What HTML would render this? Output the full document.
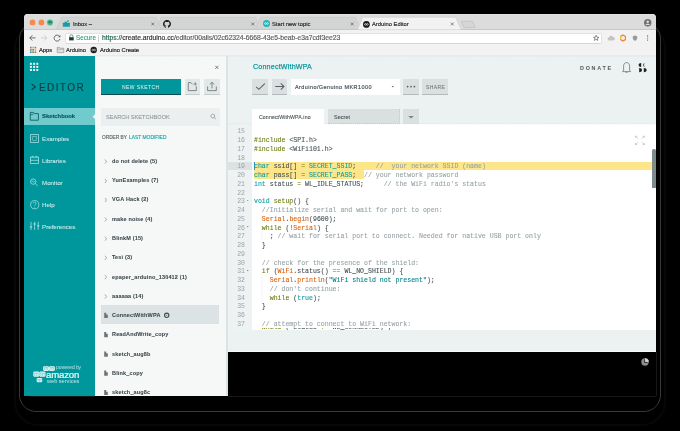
<!DOCTYPE html>
<html><head><meta charset="utf-8">
<style>
*{margin:0;padding:0;box-sizing:border-box}
html,body{width:680px;height:431px;overflow:hidden;background:#000}
body{position:relative;font-family:"Liberation Sans",sans-serif;color:#434f54}
.a{position:absolute}
.t{position:absolute;white-space:nowrap;line-height:1;will-change:transform}
svg{position:absolute;overflow:visible}
#outline{position:absolute;left:19.1px;top:22px;width:641.8px;height:390px;border:1.5px solid #383838;border-radius:17px}
#outline2{position:absolute;left:14px;top:24px;width:652px;height:402px;border:2px solid #070707;border-radius:24px}
#win{position:absolute;left:24px;top:14px;width:632px;height:382px;background:#f2f2f2;border-radius:4px 4px 0 0;overflow:hidden}
#tabs{position:absolute;left:24px;top:14px;width:632px;height:15px;background:#dcdcdc;border-radius:4px 4px 0 0}
#side{position:absolute;left:24px;top:56px;width:71px;height:340px;background:#00979c}
#panel{position:absolute;left:95px;top:56px;width:131px;height:340px;background:#f6f8f8}
#pborder{position:absolute;left:226px;top:56px;width:2px;height:340px;background:#dde3e3}
#editor{position:absolute;left:228px;top:56px;width:428px;height:296px;background:#ecf1f1}
#console{position:absolute;left:228px;top:352px;width:428px;height:44px;background:#000}
.tab{position:absolute;top:17px;height:12px}
.tabtxt{font-size:5.8px;color:#262626;top:22px;-webkit-text-stroke:0.16px #262626}
.close{font-size:7px;color:#555;top:20px}
.bm{font-size:5.8px;color:#262626;top:47.6px;-webkit-text-stroke:0.18px #262626}
.nav{font-size:6px;color:#424242}
.side-item{position:absolute;left:24px;width:71px;height:17px}
.side-txt{font-size:5.8px;color:#c6eaeb;left:42px;-webkit-text-stroke:0.08px #c6eaeb}
.sk{font-size:5.5px;font-weight:bold;color:#3a4548;left:112.1px;letter-spacing:0.16px;-webkit-text-stroke:0.05px #3a4548;margin-top:0.7px}
.chev{left:105px}
#code{position:absolute;left:228px;top:124px;width:428px;height:206px;background:#fff;overflow:hidden}
#gutter{position:absolute;left:228px;top:124px;width:24px;height:206px;background:#eef2f2}
.ln{position:absolute;left:228px;width:17px;text-align:right;font-family:"Liberation Mono",monospace;font-size:6.5px;line-height:8.72px;color:#9aa4a6;will-change:transform}
.cl{position:absolute;left:254px;font-family:"Liberation Mono",monospace;font-size:6.56px;line-height:8.72px;color:#434f54;white-space:pre;will-change:transform;-webkit-text-stroke:0.1px currentColor}
.k{color:#0a9ea3}.o{color:#6e7c0c}.f{color:#d9600e}.c{color:#97a4a6}.s{color:#00838a}
</style></head><body>
<div id="outline2"></div>
<div id="outline"></div>
<div class="a" style="left:30px;top:395.8px;width:626px;height:0.8px;background:#171717"></div>
<div class="a" style="left:655.6px;top:352px;width:0.8px;height:44px;background:#171717"></div>
<div id="win"></div>
<div id="tabs"></div>
<div class="a" style="left:26px;top:14px;width:628px;height:0.6px;background:#e2e2e2"></div>

<!-- traffic lights -->
<svg width="60" height="30" style="left:0;top:0">
  <circle cx="32.5" cy="22.4" r="2.9" fill="#f48b4c"/>
  <circle cx="41.4" cy="22.4" r="2.9" fill="#f48b4c"/>
  <circle cx="50" cy="22.4" r="3" fill="#3aae95" stroke="#a5d6a0" stroke-width="0.5"/>
  <path d="M48.3 21.6 L49.1 22.6 L50 21.6 L50.9 22.6 L51.7 21.6" fill="none" stroke="#0d4d4a" stroke-width="0.8"/>
</svg>
<!-- tabs -->
<svg width="680" height="30" style="left:0;top:0">
  <path d="M56.2 29.3 L61.6 17.3 L156 17.3 L161.4 29.3 Z" fill="#d3d5d5"/>
  <path d="M155.8 29.3 L161.2 17.3 L255.6 17.3 L261 29.3 Z" fill="#d3d5d5" stroke="#c2c4c4" stroke-width="0.5"/>
  <path d="M255.4 29.3 L260.8 17.3 L355.2 17.3 L360.6 29.3 Z" fill="#d3d5d5" stroke="#c2c4c4" stroke-width="0.5"/>
  <path d="M56.2 29.3 L61.6 17.3 L156 17.3 L161.4 29.3" fill="none" stroke="#c2c4c4" stroke-width="0.5"/>
  <path d="M357.6 29.6 L362.6 17.3 L455.6 17.3 L461 29.6 Z" fill="#f2f2f2" stroke="#c8c8c8" stroke-width="0.5"/>
  <path d="M461.4 21.3 L472.6 21.3 L475.2 27.4 L464 27.4 Z" fill="#d6d6d6" stroke="#b8b8b8" stroke-width="0.6"/>
  <!-- inbox icon -->
  <path d="M62.8 23 L69.9 23 L69.9 26.8 L62.8 26.8 Z" fill="#17a2a8"/>
  <path d="M62.8 23 L64.5 23 L65.5 24.2 L67.2 24.2 L68.2 23 L69.9 23" fill="none" stroke="#0d7f84" stroke-width="0.4"/>
  <path d="M64.6 21.8 L66 22.9 L68.6 20.4" fill="none" stroke="#17a2a8" stroke-width="1.1"/>
  <!-- close x's -->
  <g stroke="#5a5a5a" stroke-width="0.75">
   <path d="M151.4 22.6 L154.2 25.4 M154.2 22.6 L151.4 25.4"/>
   <path d="M251.4 22.6 L254.2 25.4 M254.2 22.6 L251.4 25.4"/>
   <path d="M350.8 22.6 L353.6 25.4 M353.6 22.6 L350.8 25.4"/>
   <path d="M450.9 22.6 L453.7 25.4 M453.7 22.6 L450.9 25.4"/>
  </g>
</svg>
<div class="a" style="left:24px;top:29px;width:334px;height:0.6px;background:#c6c8c8"></div>
<div class="a" style="left:461px;top:29px;width:195px;height:0.6px;background:#c6c8c8"></div>

<div class="t tabtxt" style="left:73px">Inbox –</div>
<svg width="8" height="8" style="left:162.6px;top:20.1px" viewBox="0 0 16 16"><path fill="#161616" d="M8 0C3.58 0 0 3.58 0 8c0 3.54 2.29 6.53 5.47 7.59.4.07.55-.17.55-.38 0-.19-.01-.82-.01-1.49-2.01.37-2.53-.49-2.69-.94-.09-.23-.48-.94-.82-1.13-.28-.15-.68-.52-.01-.53.63-.01 1.08.58 1.23.82.72 1.21 1.87.87 2.33.66.07-.52.28-.87.51-1.07-1.78-.2-3.64-.89-3.64-3.95 0-.87.31-1.59.82-2.15-.08-.2-.36-1.02.08-2.12 0 0 .67-.21 2.2.82.64-.18 1.32-.27 2-.27.68 0 1.36.09 2 .27 1.53-1.04 2.2-.82 2.2-.82.44 1.1.16 1.92.08 2.12.51.56.82 1.27.82 2.15 0 3.07-1.87 3.75-3.65 3.95.29.25.54.73.54 1.48 0 1.07-.01 1.93-.01 2.2 0 .21.15.46.55.38A8.013 8.013 0 0016 8c0-4.42-3.58-8-8-8z"/></svg>
<svg width="8" height="8" style="left:262.6px;top:20.4px" viewBox="0 0 8 8"><circle cx="3.5" cy="3.5" r="3.5" fill="#24b3b8"/><path d="M1.6 3.5 C1.6 2.4 3.5 2.4 3.5 3.5 C3.5 4.6 5.4 4.6 5.4 3.5 C5.4 2.4 3.5 2.4 3.5 3.5 C3.5 4.6 1.6 4.6 1.6 3.5 Z" fill="none" stroke="#fff" stroke-width="0.7"/></svg>
<div class="t tabtxt" style="left:272px">Start new topic</div>
<svg width="8" height="8" style="left:362.6px;top:20.6px" viewBox="0 0 8 8"><circle cx="3.4" cy="3.4" r="3.4" fill="#1c1c1c"/><path d="M1.5 3.4 C1.5 2.3 3.4 2.3 3.4 3.4 C3.4 4.5 5.3 4.5 5.3 3.4 C5.3 2.3 3.4 2.3 3.4 3.4 C3.4 4.5 1.5 4.5 1.5 3.4 Z" fill="none" stroke="#fff" stroke-width="0.6"/></svg>
<div class="t tabtxt" style="left:372px">Arduino Editor</div>
<!-- profile -->
<svg width="8" height="8" style="left:644.3px;top:18.5px" viewBox="0 0 8 8"><circle cx="3.7" cy="3.7" r="3.7" fill="#707070"/><circle cx="3.7" cy="2.8" r="1.2" fill="#dcdcdc"/><path d="M1.6 5.6 C2 4.4 5.4 4.4 5.8 5.6 L5.8 6 L1.6 6 Z" fill="#dcdcdc"/></svg>

<!-- toolbar -->
<svg width="680" height="60" style="left:0;top:0">
  <g fill="none" stroke="#5d5d5d" stroke-width="0.9">
    <path d="M29.8 37.9 L35.5 37.9 M32.3 35.3 L29.8 37.9 L32.3 40.5"/>
    <path d="M59.6 36.4 A3 3 0 1 0 60 39" />
  </g>
  <path d="M60.4 34.9 L60.4 37.3 L58 37.3 Z" fill="#5d5d5d"/>
  <g fill="none" stroke="#cdcdcd" stroke-width="0.9">
    <path d="M41.2 37.9 L46.9 37.9 M44.4 35.3 L46.9 37.9 L44.4 40.5"/>
  </g>
  <!-- lock -->
  <path d="M69.8 37.2 L69.8 36.4 A1.6 1.6 0 0 1 73 36.4 L73 37.2" fill="none" stroke="#1f7a52" stroke-width="0.7"/>
  <rect x="69.1" y="37.2" width="4.6" height="3.2" fill="#173d2c"/>
  <!-- star -->
  <path d="M596.2 35.3 L597 37.2 L598.9 37.3 L597.4 38.5 L597.9 40.4 L596.2 39.3 L594.5 40.4 L595 38.5 L593.5 37.3 L595.4 37.2 Z" fill="none" stroke="#5a5a5a" stroke-width="0.7"/>
  <!-- drive -->
  <path d="M608.6 40.4 A1.5 1.5 0 0 1 608.9 37.5 A2.2 2.2 0 0 1 613 37 A1.7 1.7 0 0 1 613.4 40.4 Z" fill="#c4c4c4"/>
  <!-- orange ext -->
  <path d="M623 35 L625.4 36.4 L625.4 39.6 L623 41 L620.6 39.6 L620.6 36.4 Z" fill="none" stroke="#f07f25" stroke-width="1.1"/><path d="M620.6 36.6 L620.6 39.4" stroke="#f5c04a" stroke-width="1.1"/>
  <!-- shield -->
  <path d="M635 35.4 L637.2 36.2 L637.2 38 C637.2 39.4 636 40.4 635 40.8 C634 40.4 632.8 39.4 632.8 38 L632.8 36.2 Z" fill="#9a9a9a"/>
  <!-- menu -->
  <g fill="#5a5a5a"><circle cx="647.6" cy="35.9" r="0.6"/><circle cx="647.6" cy="38" r="0.6"/><circle cx="647.6" cy="40.1" r="0.6"/></g>
  <!-- apps grid -->
  <g>
   <rect x="30" y="46.8" width="1.6" height="1.6" fill="#e4572e"/><rect x="32.3" y="46.8" width="1.6" height="1.6" fill="#f4a228"/><rect x="34.6" y="46.8" width="1.6" height="1.6" fill="#e4572e"/>
   <rect x="30" y="49.1" width="1.6" height="1.6" fill="#2f9e5a"/><rect x="32.3" y="49.1" width="1.6" height="1.6" fill="#3f7fd8"/><rect x="34.6" y="49.1" width="1.6" height="1.6" fill="#f4a228"/>
   <rect x="30" y="51.4" width="1.6" height="1.6" fill="#3f7fd8"/><rect x="32.3" y="51.4" width="1.6" height="1.6" fill="#2f9e5a"/><rect x="34.6" y="51.4" width="1.6" height="1.6" fill="#e4572e"/>
  </g>
  <!-- folder -->
  <path d="M57.2 47.4 L59.6 47.4 L60.3 48.2 L63.8 48.2 L63.8 52.6 L57.2 52.6 Z" fill="#e0e0e0" stroke="#8a8a8a" stroke-width="0.6"/>
  <path d="M57.2 49.2 L63.8 49.2" stroke="#8a8a8a" stroke-width="0.5"/>
  <!-- arduino create -->
  <circle cx="93.7" cy="50" r="3.2" fill="#1c1c1c"/>
  <path d="M91.8 50 C91.8 48.9 93.7 48.9 93.7 50 C93.7 51.1 95.6 51.1 95.6 50 C95.6 48.9 93.7 48.9 93.7 50 C93.7 51.1 91.8 51.1 91.8 50 Z" fill="none" stroke="#ddd" stroke-width="0.6"/>
</svg>
<div class="a" style="left:65.2px;top:33px;width:536.8px;height:11.2px;background:#fff;border:0.6px solid #e2e2e2;border-bottom-color:#d6d6d6;border-radius:2px"></div>
<svg width="680" height="60" style="left:0;top:0">
  <path d="M69.8 37.2 L69.8 36.4 A1.6 1.6 0 0 1 73 36.4 L73 37.2" fill="none" stroke="#1f7a52" stroke-width="0.7"/>
  <rect x="69.1" y="37.2" width="4.6" height="3.2" fill="#173d2c"/>
  <path d="M596.2 35.3 L597 37.2 L598.9 37.3 L597.4 38.5 L597.9 40.4 L596.2 39.3 L594.5 40.4 L595 38.5 L593.5 37.3 L595.4 37.2 Z" fill="none" stroke="#5a5a5a" stroke-width="0.7"/>
</svg>
<div class="t" style="left:76.4px;top:35.4px;font-size:6.3px;color:#22936a;-webkit-text-stroke:0.06px #22936a">Secure</div>
<div class="a" style="left:98.2px;top:34.6px;width:0.6px;height:7px;background:#cfcfcf"></div>
<div class="t" style="left:101.7px;top:35.1px;font-size:6.74px;color:#333;-webkit-text-stroke:0.18px #333"><span style="color:#18875a">https://</span>create.arduino.cc<span style="color:#7a7a7a">/editor/00alis/02c62324-6668-43e5-beab-e3a7cdf3ee23</span></div>

<!-- bookmarks -->
<div class="t bm" style="left:38.5px">Apps</div>
<div class="t bm" style="left:66px">Arduino</div>
<div class="t bm" style="left:99.9px">Arduino Create</div>

<div id="side"></div>
<div id="panel"></div>
<div id="pborder"></div>
<div id="editor"></div>
<div id="console"></div>
<svg width="680" height="60" style="left:0;top:0"><path d="M95 55.9 L656 55.9" stroke="#d2d6d6" stroke-width="0.8" stroke-dasharray="1.2 0.9"/></svg>

<!-- sidebar -->
<svg width="100" height="400" style="left:0;top:0">
  <g fill="#e9f7f7">
   <rect x="29.9" y="62.8" width="2" height="2"/><rect x="33.1" y="62.8" width="2" height="2"/><rect x="36.3" y="62.8" width="2" height="2"/>
   <rect x="29.9" y="65.9" width="2" height="2"/><rect x="33.1" y="65.9" width="2" height="2"/><rect x="36.3" y="65.9" width="2" height="2"/>
   <rect x="29.9" y="69" width="2" height="2"/><rect x="33.1" y="69" width="2" height="2"/><rect x="36.3" y="69" width="2" height="2"/>
  </g>
  <path d="M31.6 83.9 L35.2 86.9 L31.6 89.9" fill="none" stroke="#0a3a3d" stroke-width="1.15"/>
</svg>
<div class="t" style="left:38.6px;top:83.00px;font-size:10px;letter-spacing:1.4px;color:#083d40;-webkit-text-stroke:0.12px #083d40">EDITOR</div>
<div class="side-item" style="top:107.9px;height:16.8px;background:#71cbcc"></div>
<svg width="100" height="400" style="left:0;top:0">
  <path d="M92.6 116.7 L95.2 114.3 L95.2 119.1 Z" fill="#f6f8f8"/>
  <!-- folder sketchbook -->
  <path d="M30.3 112.4 L33.4 112.4 L34.3 113.6 L38.4 113.6 L38.4 120.2 L30.3 120.2 Z" fill="none" stroke="#0a5a5d" stroke-width="0.85"/>
  <path d="M30.3 114.6 L32.8 114.6 L33.6 113.6" fill="none" stroke="#0a5a5d" stroke-width="0.7"/>
  <g fill="none" stroke="#a8dedf" stroke-width="0.8">
   <!-- examples -->
   <rect x="30.6" y="134.6" width="7.9" height="7.8"/>
   <rect x="32.8" y="136.6" width="3.4" height="3.9" stroke-width="0.5"/>
   <!-- libraries -->
   <rect x="30.6" y="157.2" width="7.9" height="6.2"/>
   <path d="M30.6 160.3 L38.5 160.3 M31.6 157.2 L32.6 155.9 L33.6 157.2 M35.5 157.2 L36.5 155.9 L37.5 157.2"/>
   <!-- monitor -->
   <circle cx="33.2" cy="181.6" r="2.7"/>
   <path d="M35.2 183.6 L37.8 186"/>
   <path d="M31.2 181.8 L32.1 181.8 L32.8 180.6 L33.6 182.6 L34.3 181.6 L35.2 181.6" stroke-width="0.5"/>
   <!-- help -->
   <circle cx="34.7" cy="204.7" r="4.1"/>
   <path d="M33.3 203.5 A1.4 1.4 0 1 1 35.3 204.8 C34.8 205.1 34.7 205.4 34.7 206" stroke-width="0.7"/>
   <!-- prefs -->
   <path d="M31 221.8 L31 229.9 M34.6 221.8 L34.6 229.9 M38.2 221.8 L38.2 229.9"/>
  </g>
  <g fill="#a8dedf">
   <circle cx="34.7" cy="207.3" r="0.45"/>
   <rect x="29.9" y="226.4" width="2.2" height="1.2"/>
   <rect x="33.5" y="223.4" width="2.2" height="1.2"/>
   <rect x="37.1" y="225.2" width="2.2" height="1.2"/>
  </g>
</svg>
<div class="t side-txt" style="top:114.30px;color:#08575a;font-weight:bold;font-size:5.85px;-webkit-text-stroke:0.15px #08575a">Sketchbook</div>
<div class="t side-txt" style="top:136.30px;font-size:6.2px">Examples</div>
<div class="t side-txt" style="top:158.10px;font-size:6.2px">Libraries</div>
<div class="t side-txt" style="top:180.00px;font-size:6.2px">Monitor</div>
<div class="t side-txt" style="top:202.00px;font-size:6.2px">Help</div>
<div class="t side-txt" style="top:224.00px;font-size:6.2px">Preferences</div>

<!-- aws logo -->
<svg width="100" height="400" style="left:0;top:0">
<path d="M43.90 366.20 L48.20 366.20 L49.00 367.10 L49.00 370.10 L48.20 371.00 L43.90 371.00 L43.10 370.10 L43.10 367.10 Z" fill="#e8f7f7"/>
<path d="M46.05 367.50 L46.05 370.50 M44.40 367.80 L44.40 370.20 M47.70 367.80 L47.70 370.20 M43.70 367.40 L46.05 367.70 L48.40 367.40" fill="none" stroke="#3fb0b3" stroke-width="0.45"/>
<path d="M49.80 366.20 L54.10 366.20 L54.90 367.10 L54.90 370.10 L54.10 371.00 L49.80 371.00 L49.00 370.10 L49.00 367.10 Z" fill="#e8f7f7"/>
<path d="M51.95 367.50 L51.95 370.50 M50.30 367.80 L50.30 370.20 M53.60 367.80 L53.60 370.20 M49.60 367.40 L51.95 367.70 L54.30 367.40" fill="none" stroke="#3fb0b3" stroke-width="0.45"/>
<path d="M34.10 371.60 L38.60 371.60 L39.40 372.50 L39.40 375.80 L38.60 376.70 L34.10 376.70 L33.30 375.80 L33.30 372.50 Z" fill="#e8f7f7"/>
<path d="M36.35 372.90 L36.35 376.20 M34.64 373.20 L34.64 375.90 M38.06 373.20 L38.06 375.90 M33.90 372.80 L36.35 373.10 L38.80 372.80" fill="none" stroke="#3fb0b3" stroke-width="0.45"/>
<path d="M40.20 371.60 L44.70 371.60 L45.50 372.50 L45.50 375.80 L44.70 376.70 L40.20 376.70 L39.40 375.80 L39.40 372.50 Z" fill="#e8f7f7"/>
<path d="M42.45 372.90 L42.45 376.20 M40.74 373.20 L40.74 375.90 M44.16 373.20 L44.16 375.90 M40.00 372.80 L42.45 373.10 L44.90 372.80" fill="none" stroke="#3fb0b3" stroke-width="0.45"/>
<path d="M37.50 377.90 L41.40 377.90 L42.20 378.80 L42.20 381.40 L41.40 382.30 L37.50 382.30 L36.70 381.40 L36.70 378.80 Z" fill="#e8f7f7"/>
<path d="M39.45 379.20 L39.45 381.80 M37.91 379.50 L37.91 381.50 M40.99 379.50 L40.99 381.50 M37.30 379.10 L39.45 379.40 L41.60 379.10" fill="none" stroke="#3fb0b3" stroke-width="0.45"/>
</svg>
<div class="t" style="left:55.8px;top:365.9px;font-size:4.85px;color:#bfe6e7">powered by</div>
<div class="t" style="left:46.4px;top:370.3px;font-size:9.6px;color:#eef9f9;letter-spacing:-0.15px;-webkit-text-stroke:0.2px #eef9f9">amazon</div>
<div class="t" style="left:46.8px;top:379.1px;font-size:5.6px;color:#bfe6e7">web services</div>

<!-- panel -->
<svg width="240" height="400" style="left:0;top:0">
  <path d="M215.3 65.8 L218.4 68.9 M218.4 65.8 L215.3 68.9" stroke="#5a5a5a" stroke-width="0.75"/>
</svg>
<div class="a" style="left:100.9px;top:78.8px;width:79.9px;height:16px;background:#00979c;border-bottom:1.6px solid #0f4b4e"></div>
<div class="t" style="left:122.2px;top:84.70px;font-size:5px;letter-spacing:0.42px;color:#e3f5f5">NEW SKETCH</div>
<div class="a" style="left:184.6px;top:78.8px;width:15.3px;height:16px;background:#e2e7e7;border-bottom:1.6px solid #c6cdcd"></div>
<div class="a" style="left:204.1px;top:78.8px;width:15.7px;height:16px;background:#e2e7e7;border-bottom:1.6px solid #c6cdcd"></div>
<svg width="240" height="400" style="left:0;top:0">
  <g fill="none" stroke="#5d676a" stroke-width="0.75">
   <path d="M192.5 84.3 L190.8 82.6 L188.3 82.6 L188.3 90.6 L196.3 90.6 L196.3 86.3"/>
   <path d="M193.5 84 L197 84 M195.25 82.2 L195.25 85.8" stroke-width="0.6"/>
   <path d="M207.6 86.4 L207.6 90.6 L216.3 90.6 L216.3 86.4"/>
   <path d="M212 88.4 L212 82.4 M209.9 84.4 L212 82.3 L214.1 84.4"/>
  </g>
</svg>
<div class="a" style="left:100.9px;top:107.9px;width:118.9px;height:17.8px;background:#eceff0"></div>
<div class="t" style="left:106px;top:115.20px;font-size:5.6px;color:#8f999c;-webkit-text-stroke:0.1px #8f999c">SEARCH SKETCHBOOK</div>
<svg width="240" height="400" style="left:0;top:0">
  <circle cx="212.8" cy="116.1" r="1.9" fill="none" stroke="#8a9497" stroke-width="0.7"/>
  <path d="M214.2 117.5 L215.9 119.2" stroke="#8a9497" stroke-width="0.8"/>
</svg>
<div class="t" style="left:101.8px;top:136.00px;font-size:4.75px;color:#5d686b;-webkit-text-stroke:0.15px #5d686b">ORDER BY</div>
<div class="t" style="left:128.6px;top:136.00px;font-size:4.9px;color:#19a7ab;-webkit-text-stroke:0.15px #19a7ab">LAST MODIFIED</div>

<svg width="240" height="400" style="left:0;top:0">
  <g fill="none" stroke="#6b7578" stroke-width="0.6">
   <path d="M104.9 159.5 L106.6 161.5 L104.9 163.5"/>
   <path d="M104.9 179.0 L106.6 181.0 L104.9 183.0"/>
   <path d="M104.9 198.0 L106.6 200.0 L104.9 202.0"/>
   <path d="M104.9 217.5 L106.6 219.5 L104.9 221.5"/>
   <path d="M104.9 236.7 L106.6 238.7 L104.9 240.7"/>
   <path d="M104.9 255.8 L106.6 257.8 L104.9 259.8"/>
   <path d="M104.9 275.2 L106.6 277.2 L104.9 279.2"/>
   <path d="M104.9 294.5 L106.6 296.5 L104.9 298.5"/>
  </g>
</svg>
<div class="t sk" style="top:158.3px">do not delete (5)</div>
<div class="t sk" style="top:177.8px">YunExamples (7)</div>
<div class="t sk" style="top:196.8px">VGA Hack (2)</div>
<div class="t sk" style="top:216.3px">make noise (4)</div>
<div class="t sk" style="top:235.5px">BlinkM (15)</div>
<div class="t sk" style="top:254.5px">Tesi (3)</div>
<div class="t sk" style="top:273.9px">epaper_arduino_130412 (1)</div>
<div class="t sk" style="top:293.2px">aaaaaa (14)</div>
<div class="a" style="left:101.3px;top:305.2px;width:118.1px;height:19px;background:#dce3e4"></div>
<svg width="240" height="400" style="left:0;top:0">
  <g fill="#6b7578">
   <path d="M104.2 312.8 L106.2 312.8 L106.2 314.6 L107.8 314.6 L107.8 318 L104.2 318 Z"/>
   <path d="M104.2 332 L106.2 332 L106.2 333.8 L107.8 333.8 L107.8 337.2 L104.2 337.2 Z"/>
   <path d="M104.2 351.5 L106.2 351.5 L106.2 353.3 L107.8 353.3 L107.8 356.7 L104.2 356.7 Z"/>
   <path d="M104.2 370.5 L106.2 370.5 L106.2 372.3 L107.8 372.3 L107.8 375.7 L104.2 375.7 Z"/>
   <path d="M104.2 390 L106.2 390 L106.2 391.8 L107.8 391.8 L107.8 395 L104.2 395 Z"/>
  </g>
  <circle cx="166.7" cy="315.3" r="2.15" fill="none" stroke="#3f4a4d" stroke-width="1.1"/>
  <circle cx="166.7" cy="315.3" r="0.5" fill="#3f4a4d"/>
</svg>
<div class="t sk" style="top:312.4px">ConnectWithWPA</div>
<div class="t sk" style="top:331.6px">ReadAndWrite_copy</div>
<div class="t sk" style="top:351.1px">sketch_aug8b</div>
<div class="t sk" style="top:370.1px">Blink_copy</div>
<div class="t sk" style="top:389.6px">sketch_aug8c</div>

<!-- editor header -->
<div class="t" style="left:252.5px;top:63.6px;font-size:7.1px;letter-spacing:0.2px;color:#0e9a9e;-webkit-text-stroke:0.25px #0e9a9e">ConnectWithWPA</div>
<div class="t" style="left:580px;top:66.1px;font-size:5.4px;font-weight:bold;letter-spacing:1.75px;color:#4f5a5e">DONATE</div>
<svg width="680" height="130" style="left:0;top:0">
  <!-- bell -->
  <path d="M622.6 71.6 L630.6 71.6 L629.6 70.2 L629.6 66.2 C629.6 63.8 628.2 62.6 626.6 62.6 C625 62.6 623.6 63.8 623.6 66.2 L623.6 70.2 Z" fill="none" stroke="#5b6669" stroke-width="0.7"/>
  <path d="M625.6 72.4 L627.6 72.4" stroke="#5b6669" stroke-width="0.6"/>
  <!-- profile blobs -->
  <g fill="#1a2023">
   <path d="M641.2 63.1 L641.2 67 A2.6 1.95 0 0 1 641.2 63.1 Z"/>
   <path d="M645.2 63.1 A2 1.95 0 0 0 645.2 67 A1.2 1.95 0 0 1 645.2 63.1 Z"/>
   <path d="M639.2 68 L639.2 72.2 A2.8 2.1 0 0 0 639.2 68 Z"/>
   <path d="M643.8 68 L643.8 72.2 A2.8 2.1 0 0 0 643.8 68 Z"/>
  </g>
</svg>
<div class="a" style="left:252.3px;top:79.1px;width:15.6px;height:15.9px;background:#dae0e0;border-bottom:1.5px solid #b3baba"></div>
<div class="a" style="left:271.9px;top:79.1px;width:15.1px;height:15.9px;background:#dae0e0;border-bottom:1.5px solid #b3baba"></div>
<div class="a" style="left:290.7px;top:79.4px;width:109.1px;height:15.3px;background:#fff"></div>
<div class="t" style="left:295px;top:85.30px;font-size:5.5px;letter-spacing:0.42px;color:#4a5559;-webkit-text-stroke:0.18px #4a5559">Arduino/Genuino MKR1000</div>
<div class="a" style="left:403.2px;top:79.1px;width:15.6px;height:15.9px;background:#dae0e0;border-bottom:1.5px solid #b3baba"></div>
<div class="a" style="left:422.3px;top:79.1px;width:25.7px;height:15.9px;background:#dae0e0;border-bottom:1.5px solid #b3baba"></div>
<div class="t" style="left:425.7px;top:85.40px;font-size:5px;letter-spacing:0.42px;color:#6f797c;-webkit-text-stroke:0.08px #6f797c">SHARE</div>
<svg width="680" height="130" style="left:0;top:0">
  <path d="M256.1 86.9 L258.9 89.4 L264.8 83.6" fill="none" stroke="#56626a" stroke-width="1.05"/>
  <path d="M275.2 86.5 L284 86.5 M280.8 83.4 L284 86.5 L280.8 89.6" fill="none" stroke="#56626a" stroke-width="1.05"/>
  <path d="M391.6 85.9 L394 85.9 L392.8 87.4 Z" fill="#6a7477"/>
  <g fill="#4f5a5e"><circle cx="407.6" cy="86.6" r="0.85"/><circle cx="411" cy="86.6" r="0.85"/><circle cx="414.4" cy="86.6" r="0.85"/></g>
</svg>

<div class="a" style="left:252px;top:109px;width:72.2px;height:15.4px;background:#fff"></div>
<div class="t" style="left:259px;top:114.5px;font-size:5.2px;letter-spacing:0.12px;color:#4a5559;-webkit-text-stroke:0.12px #4a5559">ConnectWithWPA.ino</div>
<div class="a" style="left:328px;top:109.1px;width:71.8px;height:14.9px;background:#dae0e0;border-right:0.6px dotted #c2caca;border-bottom:0.6px dotted #c2caca"></div>
<div class="t" style="left:334.3px;top:114.6px;font-size:5.4px;letter-spacing:0.1px;color:#4a5559;-webkit-text-stroke:0.12px #4a5559">Secret</div>
<div class="a" style="left:403.2px;top:109.1px;width:15.6px;height:14.9px;background:#dae0e0"></div>
<svg width="680" height="130" style="left:0;top:0">
  <path d="M408.2 116 L413.8 116 L411 118.6 Z" fill="#7b8588"/>
</svg>

<!-- code -->
<div id="code"></div>
<div id="gutter"></div>
<div class="a" style="left:228px;top:161.5px;width:24px;height:8.9px;background:#dce2e3"></div>
<div class="a" style="left:254.1px;top:161.5px;width:398px;height:8.72px;background:#fde68a"></div>
<div class="a" style="left:254.1px;top:170.2px;width:109.5px;height:8.5px;background:#fde68a"></div>
<div class="a" style="left:254.1px;top:161.5px;width:0.6px;height:8.6px;background:#3f8fb0"></div>
<!--CODE-->
<div class="a" style="left:0;top:124px;width:680px;height:205.6px;overflow:hidden"><div class="a" style="left:0;top:-124px;width:680px;height:431px">
<div class="ln" style="top:128.26px">15</div>
<div class="ln" style="top:137.02px">16</div>
<div class="ln" style="top:145.78px">17</div>
<div class="ln" style="top:154.54px">18</div>
<div class="ln" style="top:163.30px">19</div>
<div class="ln" style="top:172.06px">20</div>
<div class="ln" style="top:180.82px">21</div>
<div class="ln" style="top:189.58px">22</div>
<div class="ln" style="top:198.34px">23</div>
<div class="ln" style="top:207.10px">24</div>
<div class="ln" style="top:215.86px">25</div>
<div class="ln" style="top:224.62px">26</div>
<div class="ln" style="top:233.38px">27</div>
<div class="ln" style="top:242.14px">28</div>
<div class="ln" style="top:250.90px">29</div>
<div class="ln" style="top:259.66px">30</div>
<div class="ln" style="top:268.42px">31</div>
<div class="ln" style="top:277.18px">32</div>
<div class="ln" style="top:285.94px">33</div>
<div class="ln" style="top:294.70px">34</div>
<div class="ln" style="top:303.46px">35</div>
<div class="ln" style="top:312.22px">36</div>
<div class="ln" style="top:320.98px">37</div>
<div class="ln" style="top:329.74px">38</div>
<div class="cl" style="top:128.26px"></div>
<div class="cl" style="top:137.02px"><span class="o">#include</span> &lt;SPI.h&gt;</div>
<div class="cl" style="top:145.78px"><span class="o">#include</span> &lt;WiFi101.h&gt;</div>
<div class="cl" style="top:154.54px"></div>
<div class="cl" style="top:163.30px"><span class="k">char</span> ssid[] <span class="o">=</span> <span class="k">SECRET_SSID</span>;     <span class="c">//  your network SSID (name)</span></div>
<div class="cl" style="top:172.06px"><span class="k">char</span> pass[] <span class="o">=</span> <span class="k">SECRET_PASS</span>;  <span class="c">// your network password</span></div>
<div class="cl" style="top:180.82px"><span class="k">int</span> status <span class="o">=</span> WL_IDLE_STATUS;     <span class="c">// the WiFi radio's status</span></div>
<div class="cl" style="top:189.58px"></div>
<div class="cl" style="top:198.34px"><span class="k">void</span> <span class="o">setup</span>() {</div>
<div class="cl" style="top:207.10px">  <span class="c">//Initialize serial and wait for port to open:</span></div>
<div class="cl" style="top:215.86px">  <span class="f">Serial</span>.<span class="f">begin</span>(9600);</div>
<div class="cl" style="top:224.62px">  <span class="o">while</span> (<span class="o">!</span><span class="f">Serial</span>) {</div>
<div class="cl" style="top:233.38px">    ; <span class="c">// wait for serial port to connect. Needed for native USB port only</span></div>
<div class="cl" style="top:242.14px">  }</div>
<div class="cl" style="top:250.90px"></div>
<div class="cl" style="top:259.66px">  <span class="c">// check for the presence of the shield:</span></div>
<div class="cl" style="top:268.42px">  <span class="o">if</span> (<span class="f">WiFi</span>.status() <span class="o">==</span> WL_NO_SHIELD) {</div>
<div class="cl" style="top:277.18px">    <span class="f">Serial</span>.<span class="f">println</span>(<span class="s">"WiFi shield not present"</span>);</div>
<div class="cl" style="top:285.94px">    <span class="c">// don't continue:</span></div>
<div class="cl" style="top:294.70px">    <span class="o">while</span> (<span class="k">true</span>);</div>
<div class="cl" style="top:303.46px">  }</div>
<div class="cl" style="top:312.22px"></div>
<div class="cl" style="top:320.98px">  <span class="c">// attempt to connect to WiFi network:</span></div>
<div class="cl" style="top:329.74px">  <span class="o">while</span> ( status <span class="o">!=</span> WL_CONNECTED) {</div>
</div></div>
<!--/CODE-->
<div class="a" style="left:228px;top:327.8px;width:428px;height:1.8px;overflow:hidden"><div class="cl" style="top:-3.6px;left:26px"><span class="o">  while</span> ( status <span class="o">!=</span> WL_CONNECTED) {</div></div>
<div class="a" style="left:652.1px;top:148.7px;width:3.5px;height:39.5px;background:#7d8b8c;border-radius:1.6px 1.6px 0 0"></div>
<svg width="680" height="431" style="left:0;top:0">
  <!-- fold markers -->
  <g fill="#6f7a7d">
   <path d="M246.8 199.9 L248.6 199.9 L247.7 201.1 Z"/>
   <path d="M246.8 226.2 L248.6 226.2 L247.7 227.4 Z"/>
   <path d="M246.8 270 L248.6 270 L247.7 271.2 Z"/>
  </g>
  <!-- indent guides -->
  <g stroke="#e3e8e8" stroke-width="0.5">
   <path d="M262 231.2 L262 239.8"/>
   <path d="M262 275 L262 301.5"/>
  </g>
  <!-- expand icon -->
  <g fill="none" stroke="#a9b6b8" stroke-width="0.6">
   <path d="M635.5 136.2 L638 138.7 M635.5 136.2 L637.2 136.2 M635.5 136.2 L635.5 137.9"/>
   <path d="M644.3 136.2 L641.8 138.7 M644.3 136.2 L642.6 136.2 M644.3 136.2 L644.3 137.9"/>
   <path d="M635.5 144.6 L638 142.1 M635.5 144.6 L637.2 144.6 M635.5 144.6 L635.5 142.9"/>
   <path d="M644.3 144.6 L641.8 142.1 M644.3 144.6 L642.6 144.6 M644.3 144.6 L644.3 142.9"/>
  </g>
  <!-- header dotted line -->
  <path d="M228 123.8 L252 123.8 M324.2 123.8 L656 123.8" stroke="#d3dada" stroke-width="0.6" stroke-dasharray="1 1.2"/>
  <!-- console icon -->
  <circle cx="645" cy="362" r="3.7" fill="#8c8c8c"/>
  <path d="M645 358.3 A3.7 3.7 0 0 1 648.7 362 L645 362 Z" fill="#cfcfcf"/>
  <path d="M644.6 359.4 L644.6 362.5 L647.6 362.5" fill="none" stroke="#1a1a1a" stroke-width="0.8"/>
</svg>
<div class="a" style="left:228px;top:351.2px;width:428px;height:0.7px;background:#f6f9f9"></div>
<!-- bottom clip -->
<div class="a" style="left:95px;top:395.7px;width:133px;height:12px;background:#000"></div>


</body></html>
